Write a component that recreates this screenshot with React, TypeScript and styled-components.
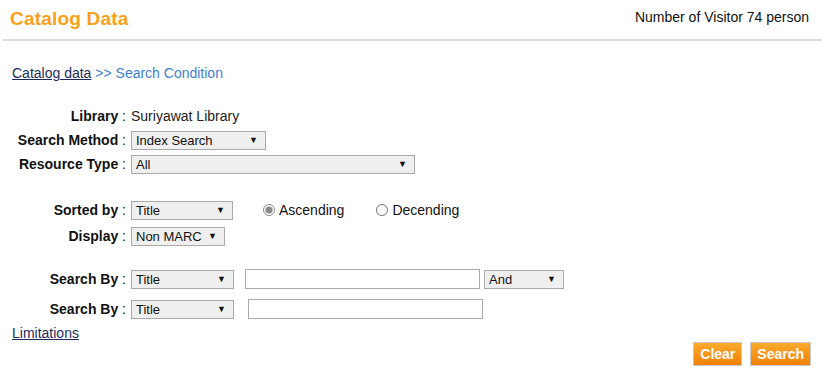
import React from "react";
import styled, { createGlobalStyle } from "styled-components";

const GlobalStyle = createGlobalStyle`
  body {
    margin: 0;
    background: #ffffff;
    font-family: "Liberation Sans", Arial, sans-serif;
    font-size: 14px;
    color: #111111;
  }
`;

export default function App() {
  return (
    <>
      <GlobalStyle />
      <Page>
        <Header>
          <Title>Catalog Data</Title>
          <Visitor>Number of Visitor 74 person</Visitor>
        </Header>
        <Rule />
        <Breadcrumb>
          <Link href="#">Catalog data</Link>
          <Crumb> &gt;&gt; Search Condition</Crumb>
        </Breadcrumb>

        <Form>
          <Row>
            <Label>
              <b>Library</b> :
            </Label>
            <Value>Suriyawat Library</Value>
          </Row>
          <Row>
            <Label>
              <b>Search Method</b> :
            </Label>
            <Dropdown width={135} value="Index Search" />
          </Row>
          <Row>
            <Label>
              <b>Resource Type</b> :
            </Label>
            <Dropdown width={284} value="All" />
          </Row>

          <Group top={21}>
            <Row height={26}>
              <Label>
                <b>Sorted by</b> :
              </Label>
              <Dropdown width={102} value="Title" />
              <Radio left={30}>
                <input type="radio" name="order" defaultChecked />
                Ascending
              </Radio>
              <Radio left={32}>
                <input type="radio" name="order" />
                Decending
              </Radio>
            </Row>
            <Row height={26}>
              <Label>
                <b>Display</b> :
              </Label>
              <Dropdown width={94} value="Non MARC" />
            </Row>
          </Group>

          <Group top={15}>
            <Row height={30}>
              <Label>
                <b>Search By</b> :
              </Label>
              <Dropdown width={103} value="Title" />
              <TextBox left={11} />
              <Dropdown width={80} value="And" left={4} />
            </Row>
            <Row height={30}>
              <Label>
                <b>Search By</b> :
              </Label>
              <Dropdown width={103} value="Title" />
              <TextBox left={14} />
            </Row>
          </Group>
        </Form>

        <Footer>
          <Link href="#">Limitations</Link>
          <Buttons>
            <Button>Clear</Button>
            <Button>Search</Button>
          </Buttons>
        </Footer>
      </Page>
    </>
  );
}

function Dropdown({
  width,
  value,
  left = 0,
}: {
  width: number;
  value: string;
  left?: number;
}) {
  return (
    <SelectWrap width={width} left={left}>
      <Select defaultValue={value}>
        <option>{value}</option>
      </Select>
      <Arrow>▼</Arrow>
    </SelectWrap>
  );
}

const Page = styled.div`
  width: 825px;
  height: 377px;
  overflow: hidden;
`;

const Header = styled.div`
  display: flex;
  justify-content: space-between;
  align-items: flex-start;
  height: 39px;
  padding: 0 16px 0 10px;
`;

const Title = styled.div`
  font-weight: 700;
  font-size: 19px;
  line-height: 22px;
  margin-top: 8px;
  color: #f8a01a;
  letter-spacing: 0.2px;
`;

const Visitor = styled.div`
  font-size: 14px;
  line-height: 16px;
  margin-top: 9px;
  color: #111111;
`;

const Rule = styled.div`
  height: 2px;
  margin: 0 3px;
  background: #dddddd;
`;

const Breadcrumb = styled.div`
  margin: 24px 0 0 12px;
  line-height: 16px;
`;

const Link = styled.a`
  color: #1c2a5c;
  text-decoration: underline;
`;

const Crumb = styled.span`
  color: #3f7fcf;
`;

const Form = styled.div`
  margin-top: 23px;
`;

const Group = styled.div<{ top: number }>`
  margin-top: ${(p) => p.top}px;
`;

const Row = styled.div<{ height?: number }>`
  display: flex;
  align-items: center;
  height: ${(p) => p.height ?? 24}px;
`;

const Label = styled.div`
  width: 126px;
  text-align: right;
  margin-right: 5px;
  white-space: nowrap;
  color: #111111;

  b {
    font-weight: 700;
  }
`;

const Value = styled.div`
  color: #222222;
`;

const SelectWrap = styled.span<{ width: number; left: number }>`
  position: relative;
  display: inline-block;
  width: ${(p) => p.width}px;
  height: 19px;
  margin-left: ${(p) => p.left}px;
`;

const Select = styled.select`
  appearance: none;
  width: 100%;
  height: 100%;
  box-sizing: border-box;
  margin: 0;
  padding: 0 0 0 4px;
  border: 1px solid #a9a9a9;
  border-radius: 0;
  background: #efefef;
  font-family: "Liberation Sans", Arial, sans-serif;
  font-size: 13px;
  color: #111111;
`;

const Arrow = styled.span`
  position: absolute;
  right: 8px;
  top: 4px;
  font-size: 9px;
  line-height: 10px;
  color: #111111;
  pointer-events: none;
`;

const Radio = styled.label<{ left: number }>`
  display: inline-flex;
  align-items: center;
  margin-left: ${(p) => p.left}px;
  color: #111111;

  input {
    width: 12px;
    height: 12px;
    margin: 0 4px 0 0;
    accent-color: #8a8a8a;
  }
`;

const TextBox = styled.input<{ left: number }>`
  width: 235px;
  height: 20px;
  box-sizing: border-box;
  margin: 0 0 0 ${(p) => p.left}px;
  border: 1px solid #a9a9a9;
  padding: 0 3px;
  font-family: "Liberation Sans", Arial, sans-serif;
  font-size: 13px;
`;

const Footer = styled.div`
  display: flex;
  justify-content: space-between;
  align-items: flex-start;
  padding: 1px 14px 0 12px;
  line-height: 16px;
`;

const Buttons = styled.div`
  display: flex;
  gap: 8px;
  margin-top: 17px;
`;

const Button = styled.button`
  height: 24px;
  padding: 0 6px;
  border: 1px solid #c8c8c8;
  background: linear-gradient(#fbab2c, #f0800a);
  color: #ffffff;
  font-family: "Liberation Sans", Arial, sans-serif;
  font-size: 14px;
  font-weight: 700;
  cursor: pointer;
`;
